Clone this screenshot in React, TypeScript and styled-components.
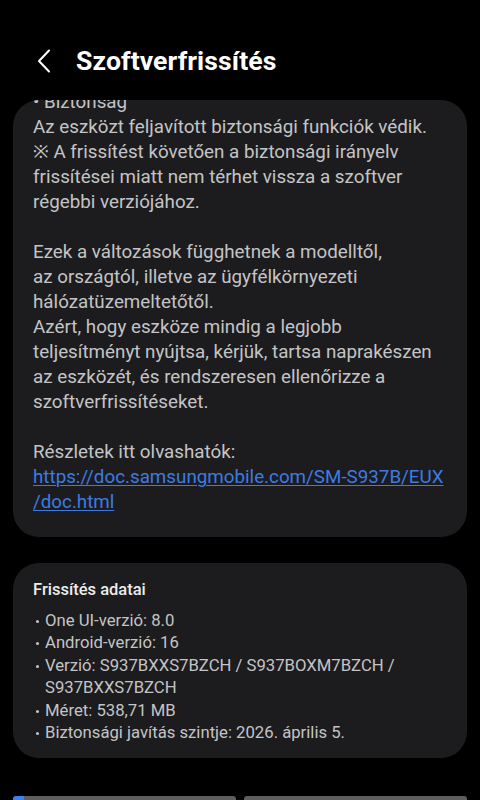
import React from "react";
import styled, { createGlobalStyle } from "styled-components";

const Global = createGlobalStyle`
  html, body { margin: 0; padding: 0; background: #000; }
  body { font-family: Roboto, "Noto Sans", sans-serif; -webkit-font-smoothing: antialiased; }
  #root { width: 480px; height: 800px; overflow: hidden; }
`;

const Screen = styled.div`
  width: 480px;
  height: 800px;
  display: flex;
  flex-direction: column;
  background: #000;
  overflow: hidden;
`;

const Header = styled.header`
  height: 100px;
  box-sizing: border-box;
  padding: 42px 0 0 32px;
  display: flex;
  align-items: flex-start;
  gap: 20px;
  flex-shrink: 0;
`;

const BackButton = styled.button`
  width: 24px;
  height: 38px;
  padding: 0;
  border: 0;
  background: none;
  display: flex;
  align-items: center;
  justify-content: center;
  color: #fff;
`;

const Title = styled.h1`
  margin: 0;
  font-family: Roboto, sans-serif;
  font-weight: 700;
  font-size: 26.6px;
  line-height: 38px;
  color: #fff;
  letter-spacing: 0.1px;
`;

const Body = styled.main`
  flex: 1;
  min-height: 0;
  padding: 0 13px;
  display: flex;
  flex-direction: column;
  gap: 26px;
`;

const Card = styled.section<{ $pad: string }>`
  background: #1c1c1e;
  border-radius: 26px;
  overflow: hidden;
  padding: ${(p) => p.$pad};
  box-sizing: border-box;
`;

const Notes = styled.div`
  margin-top: -10px;
  font-size: 18.8px;
  line-height: 25px;
  color: #c4c4c6;
  white-space: pre-line;
`;

const Link = styled.a`
  color: #3d7be3;
  text-decoration: underline;
  text-underline-offset: 2px;
  text-decoration-thickness: 1px;
`;

const CardTitle = styled.h2`
  margin: 0 0 8px;
  font-size: 16.5px;
  line-height: 24px;
  font-weight: 500;
  color: #ececec;
`;

const List = styled.ul`
  margin: 0;
  padding: 0;
  list-style: none;
`;

const Item = styled.li`
  position: relative;
  padding-left: 12px;
  font-size: 16.7px;
  line-height: 22.4px;
  color: #c4c4c6;
  &::before {
    content: "";
    position: absolute;
    left: 3px;
    top: 10px;
    width: 3px;
    height: 3px;
    border-radius: 50%;
    background: #c4c4c6;
  }
`;

const Footer = styled.footer`
  flex-shrink: 0;
  padding: 0 13px;
  display: flex;
  gap: 8px;
  height: 4px;
`;

const Bar = styled.div`
  flex: 1;
  background: #5e5e60;
  border-radius: 3px 3px 0 0;
  overflow: hidden;
  display: flex;
`;

const Progress = styled.div`
  background: #3b82f6;
  border-radius: 3px 0 0 0;
`;

export default function App() {
  const notes =
    "• Biztonság\nAz eszközt feljavított biztonsági funkciók védik.\n※ A frissítést követően a biztonsági irányelv\nfrissítései miatt nem térhet vissza a szoftver\nrégebbi verziójához.\n\nEzek a változások függhetnek a modelltől,\naz országtól, illetve az ügyfélkörnyezeti\nhálózatüzemeltetőtől.\nAzért, hogy eszköze mindig a legjobb\nteljesítményt nyújtsa, kérjük, tartsa naprakészen\naz eszközét, és rendszeresen ellenőrizze a\nszoftverfrissítéseket.\n\nRészletek itt olvashatók:\n";
  const items = [
    "One UI-verzió: 8.0",
    "Android-verzió: 16",
    "Verzió: S937BXXS7BZCH / S937BOXM7BZCH / S937BXXS7BZCH",
    "Méret: 538,71 MB",
    "Biztonsági javítás szintje: 2026. április 5.",
  ];
  return (
    <Screen>
      <Global />
      <Header>
        <BackButton aria-label="Vissza">
          <svg width="14" height="24" viewBox="0 0 14 24" fill="none">
            <path d="M12 1.5 L2 12 L12 22.5" stroke="#fff" strokeWidth="2" strokeLinecap="round" strokeLinejoin="round" />
          </svg>
        </BackButton>
        <Title>Szoftverfrissítés</Title>
      </Header>
      <Body>
        <Card $pad="0 20px 22px">
          <Notes>
            {notes}
            <Link href="#">
              https://doc.samsungmobile.com/SM-S937B/EUX
              <br />
              /doc.html
            </Link>
          </Notes>
        </Card>
        <Card $pad="15px 20px 14px">
          <CardTitle>Frissítés adatai</CardTitle>
          <List>
            {items.map((t) => (
              <Item key={t}>{t}</Item>
            ))}
          </List>
        </Card>
      </Body>
      <Footer>
        <Bar>
          <Progress style={{ width: "11px" }} />
        </Bar>
        <Bar />
      </Footer>
    </Screen>
  );
}
